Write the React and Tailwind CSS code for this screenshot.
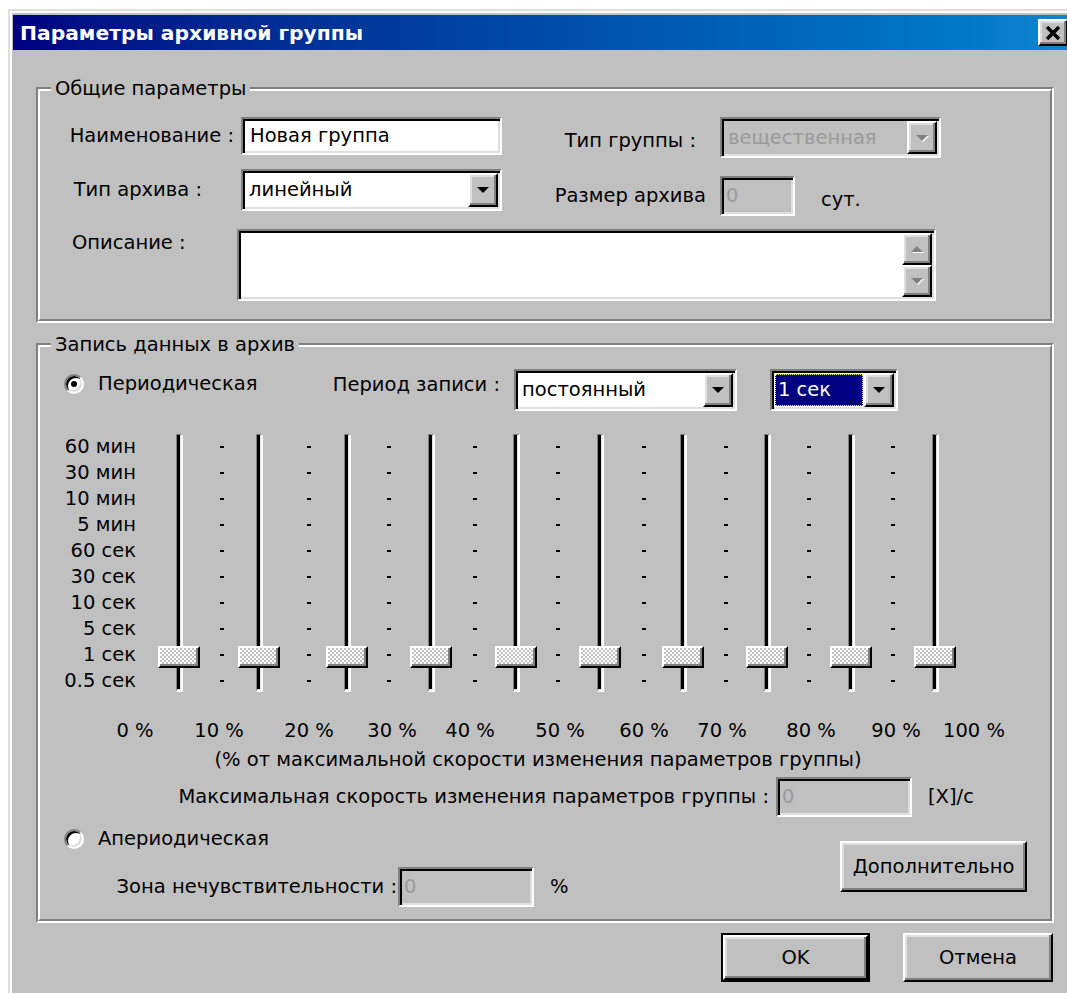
import React from "react";

// classic 3D edges, doubled for the large-scale dialog
const sunken =
  "border-2 border-t-[#808080] border-l-[#808080] border-b-white border-r-white shadow-[inset_2px_2px_0_#000,inset_-2px_-2px_0_#dfdfdf]";
const raised =
  "border-2 border-t-white border-l-white border-b-black border-r-black shadow-[inset_-2px_-2px_0_#808080,inset_2px_2px_0_#dfdfdf]";
const etchedOuter =
  "border-2 border-t-[#808080] border-l-[#808080] border-r-white border-b-white";
const etchedInner =
  "border-2 border-t-white border-l-white border-r-[#808080] border-b-[#808080]";

const DownArrow = ({ disabled }) => (
  <svg width="12" height="6" viewBox="0 0 12 6" className="overflow-visible">
    {disabled && <polygon points="1,1 13,1 7,7" fill="#fff" />}
    <polygon points="0,0 12,0 6,6" fill={disabled ? "#808080" : "#000"} />
  </svg>
);

const UpArrow = ({ disabled }) => (
  <svg width="12" height="6" viewBox="0 0 12 6" className="overflow-visible">
    {disabled && <polygon points="1,7 13,7 7,1" fill="#fff" />}
    <polygon points="0,6 12,6 6,0" fill={disabled ? "#808080" : "#000"} />
  </svg>
);

const Combo = ({ value, className = "", disabled, selected }) => (
  <div
    className={`${sunken} p-[2px] flex ${disabled ? "bg-[#c0c0c0]" : "bg-white"} ${className}`}
  >
    {selected ? (
      <div className="flex-1 m-[1px] flex items-center bg-[#000080] text-white pl-[2px] border border-dotted border-[#ffff60]">
        {value}
      </div>
    ) : (
      <div
        className={`flex-1 flex items-center pl-[4px] whitespace-nowrap overflow-hidden ${disabled ? "text-[#9a9a9a]" : ""}`}
      >
        {value}
      </div>
    )}
    <div className={`${raised} w-[30px] shrink-0 bg-[#c0c0c0] flex items-center justify-center`}>
      <DownArrow disabled={disabled} />
    </div>
  </div>
);

const Edit = ({ value, className = "", disabled }) => (
  <div
    className={`${sunken} px-[7px] flex items-center whitespace-nowrap ${disabled ? "bg-[#c0c0c0] text-[#9a9a9a]" : "bg-white"} ${className}`}
  >
    {value}
  </div>
);

const Radio = ({ checked, children, className = "" }) => (
  <div className={`flex items-center ${className}`}>
    <span className="w-[20px] h-[20px] shrink-0 rounded-full bg-white border-2 border-t-[#808080] border-l-[#808080] border-b-white border-r-white shadow-[inset_2px_2px_0_#000,inset_-2px_-2px_0_#dfdfdf] flex items-center justify-center">
      {checked && <span className="w-[6px] h-[6px] rounded-full bg-black" />}
    </span>
    <span className="ml-[14px]">{children}</span>
  </div>
);

const GroupTitle = ({ children }) => (
  <div className="-mt-[14px] ml-[11px] self-start bg-[#c0c0c0] px-[4px] h-[24px] leading-[24px]">
    {children}
  </div>
);

const Button = ({ children, className = "" }) => (
  <button className={`${raised} bg-[#c0c0c0] flex items-center justify-center ${className}`}>
    {children}
  </button>
);

const levels = [
  "60 мин",
  "30 мин",
  "10 мин",
  "5 мин",
  "60 сек",
  "30 сек",
  "10 сек",
  "5 сек",
  "1 сек",
  "0.5 сек",
];

// gaps between the ten sliders, dash marks sit roughly mid-gap
const tickCols = [
  "w-[38px] pl-[6px]",
  "w-[46px] pl-[12px]",
  "w-[42px]",
  "w-[43px] pl-[2px]",
  "w-[42px]",
  "w-[41px] pl-[4px]",
  "w-[42px] pl-[2px]",
  "w-[42px]",
  "w-[42px]",
];

const percentCols = [
  { cls: "w-[38px]", text: "10 %" },
  { cls: "w-[46px] pl-[12px]", text: "20 %" },
  { cls: "w-[42px] pl-[6px]", text: "30 %" },
  { cls: "w-[43px] pr-[7px]", text: "40 %" },
  { cls: "w-[42px] pl-[4px]", text: "50 %" },
  { cls: "w-[41px] pl-[5px]", text: "60 %" },
  { cls: "w-[42px] pr-[6px]", text: "70 %" },
  { cls: "w-[42px] pl-[4px]", text: "80 %" },
  { cls: "w-[42px] pl-[6px]", text: "90 %" },
];

const Slider = () => (
  <div className="relative w-[42px] h-[260px] flex justify-center">
    <div className="w-[7px] h-[258px] border-l border-t border-t-[#808080] border-l-[#808080] border-r-2 border-b-2 border-r-white border-b-white bg-black shadow-[inset_-1px_-1px_0_#dfdfdf]" />
    <div className="absolute left-0 top-[212px] w-[42px] h-[22px] border-2 border-t-white border-l-white border-b-black border-r-black shadow-[inset_-2px_-2px_0_#808080] bg-[image:repeating-conic-gradient(#fff_0_25%,#c0c0c0_0_50%)] bg-[length:4px_4px]" />
  </div>
);

const Ticks = ({ cls }) => (
  <div className={`${cls} flex flex-col`}>
    {levels.map((l) => (
      <div key={l} className="h-[26px] flex items-center justify-center">
        <div className="w-[4px] h-[2px] bg-black" />
      </div>
    ))}
  </div>
);

const App = () => {
  return (
    <div className="w-[1067px] h-[993px] overflow-hidden bg-white font-['DejaVu_Sans',sans-serif] text-[19.5px] leading-[24px] text-black">
      <div className="ml-[8px] mt-[9px] w-[1067px] border-t-2 border-l-2 border-t-[#dfdfdf] border-l-[#dfdfdf]">
        <div className="h-[1000px] border-t-2 border-l-2 border-t-white border-l-white bg-[#c0c0c0] pt-[2px] pl-[1px] pr-[5px]">
          {/* caption */}
          <div className="h-[35px] flex items-center bg-linear-to-r from-[#000080] to-[#1084d0] pl-[7px] pr-[2px]">
            <span className="font-bold text-white text-[20.3px]">Параметры архивной группы</span>
            <button className={`${raised} ml-auto w-[30px] h-[27px] bg-[#c0c0c0] flex items-center justify-center`}>
              <svg width="16" height="14" viewBox="0 0 16 14">
                <path d="M2 1 L14 13 M14 1 L2 13" stroke="#000" strokeWidth="3.5" />
              </svg>
            </button>
          </div>

          <div className="pl-[23px] pr-[16px]">
            {/* general settings */}
            <div className={`mt-[37px] ${etchedOuter}`}>
              <div className={`${etchedInner} flex flex-col pb-[18px]`}>
                <GroupTitle>Общие параметры</GroupTitle>

                <div className="mt-[16px] flex items-start h-[41px]">
                  <div className="w-[201px] h-[38px] pr-[7px] flex items-center justify-end whitespace-nowrap">
                    Наименование :
                  </div>
                  <Edit value="Новая группа" className="w-[261px] h-[38px]" />
                  <div className="w-[218px] h-[48px] pr-[24px] flex items-center justify-end whitespace-nowrap">
                    Тип группы :
                  </div>
                  <Combo value="вещественная" disabled className="w-[221px] h-[41px]" />
                </div>

                <div className="mt-[11px] flex items-start h-[42px]">
                  <div className="w-[201px] h-[42px] pr-[39px] flex items-center justify-end whitespace-nowrap">
                    Тип архива :
                  </div>
                  <Combo value="линейный" className="w-[261px] h-[42px]" />
                  <div className="w-[218px] h-[54px] pr-[14px] flex items-center justify-end whitespace-nowrap">
                    Размер архива
                  </div>
                  <Edit value="0" disabled className="mt-[7px] w-[75px] h-[40px] !px-[4px]" />
                  <div className="ml-[26px] h-[62px] flex items-center">сут.</div>
                </div>

                <div className="mt-[18px] flex items-start h-[72px]">
                  <div className="w-[197px] h-[28px] pl-[32px] flex items-center whitespace-nowrap">
                    Описание :
                  </div>
                  <div className={`${sunken} w-[699px] h-[72px] bg-white p-[2px] flex justify-end`}>
                    <div className="w-[30px] flex flex-col">
                      <div className={`${raised} flex-1 bg-[#c0c0c0] flex items-center justify-center`}>
                        <UpArrow disabled />
                      </div>
                      <div className={`${raised} flex-1 bg-[#c0c0c0] flex items-center justify-center`}>
                        <DownArrow disabled />
                      </div>
                    </div>
                  </div>
                </div>
              </div>
            </div>

            {/* archive recording */}
            <div className={`mt-[20px] ${etchedOuter}`}>
              <div className={`${etchedInner} flex flex-col pb-[12px]`}>
                <GroupTitle>Запись данных в архив</GroupTitle>

                <div className="mt-[12px] flex items-start h-[42px]">
                  <Radio checked className="ml-[24px] w-[250px] h-[30px]">
                    Периодическая
                  </Radio>
                  <div className="w-[200px] h-[32px] pr-[14px] flex items-center justify-end whitespace-nowrap">
                    Период записи :
                  </div>
                  <Combo value="постоянный" className="w-[223px] h-[42px]" />
                  <Combo value="1 сек" selected className="ml-[33px] w-[128px] h-[42px]" />
                </div>

                <div className="mt-[23px] flex">
                  <div className="w-[118px] pr-[22px] flex flex-col items-end">
                    {levels.map((l) => (
                      <div key={l} className="h-[26px] leading-[26px] whitespace-nowrap">
                        {l}
                      </div>
                    ))}
                  </div>
                  {tickCols.map((cls, i) => (
                    <React.Fragment key={i}>
                      <Slider />
                      <Ticks cls={cls} />
                    </React.Fragment>
                  ))}
                  <Slider />
                </div>

                <div className="mt-[25px] flex h-[24px]">
                  <div className="w-[118px] pl-[72px] flex justify-center whitespace-nowrap">0 %</div>
                  {percentCols.map((c) => (
                    <React.Fragment key={c.text}>
                      <div className="w-[42px]" />
                      <div className={`${c.cls} flex justify-center whitespace-nowrap`}>{c.text}</div>
                    </React.Fragment>
                  ))}
                  <div className="w-[42px]" />
                  <div className="w-[36px] flex justify-center whitespace-nowrap">100 %</div>
                </div>

                <div className="mt-[5px] w-[996px] text-center whitespace-nowrap">
                  (% от максимальной скорости изменения параметров группы)
                </div>

                <div className="mt-[5px] flex items-center h-[40px]">
                  <div className="w-[736px] pr-[7px] flex justify-end whitespace-nowrap">
                    Максимальная скорость изменения параметров группы :
                  </div>
                  <Edit value="0" disabled className="w-[136px] h-[40px] !px-[4px]" />
                  <div className="ml-[16px] whitespace-nowrap">[X]/c</div>
                </div>

                <div className="mt-[10px] flex items-start">
                  <div className="flex flex-col">
                    <Radio className="ml-[24px] h-[24px]">Апериодическая</Radio>
                    <div className="mt-[16px] flex items-center h-[40px]">
                      <div className="w-[358px] pr-[1px] flex justify-end whitespace-nowrap">
                        Зона нечувствительности :
                      </div>
                      <Edit value="0" disabled className="w-[136px] h-[40px] !px-[4px]" />
                      <div className="ml-[16px]">%</div>
                    </div>
                  </div>
                  <Button className="ml-auto mr-[23px] mt-[14px] w-[187px] h-[51px]">
                    Дополнительно
                  </Button>
                </div>
              </div>
            </div>

            {/* dialog buttons */}
            <div className="mt-[10px] flex justify-end gap-[33px] pr-[1px]">
              <div className="border-2 border-black">
                <Button className="w-[145px] h-[45px]">OK</Button>
              </div>
              <Button className="w-[150px] h-[49px]">Отмена</Button>
            </div>
          </div>
        </div>
      </div>
    </div>
  );
};

export default App;
